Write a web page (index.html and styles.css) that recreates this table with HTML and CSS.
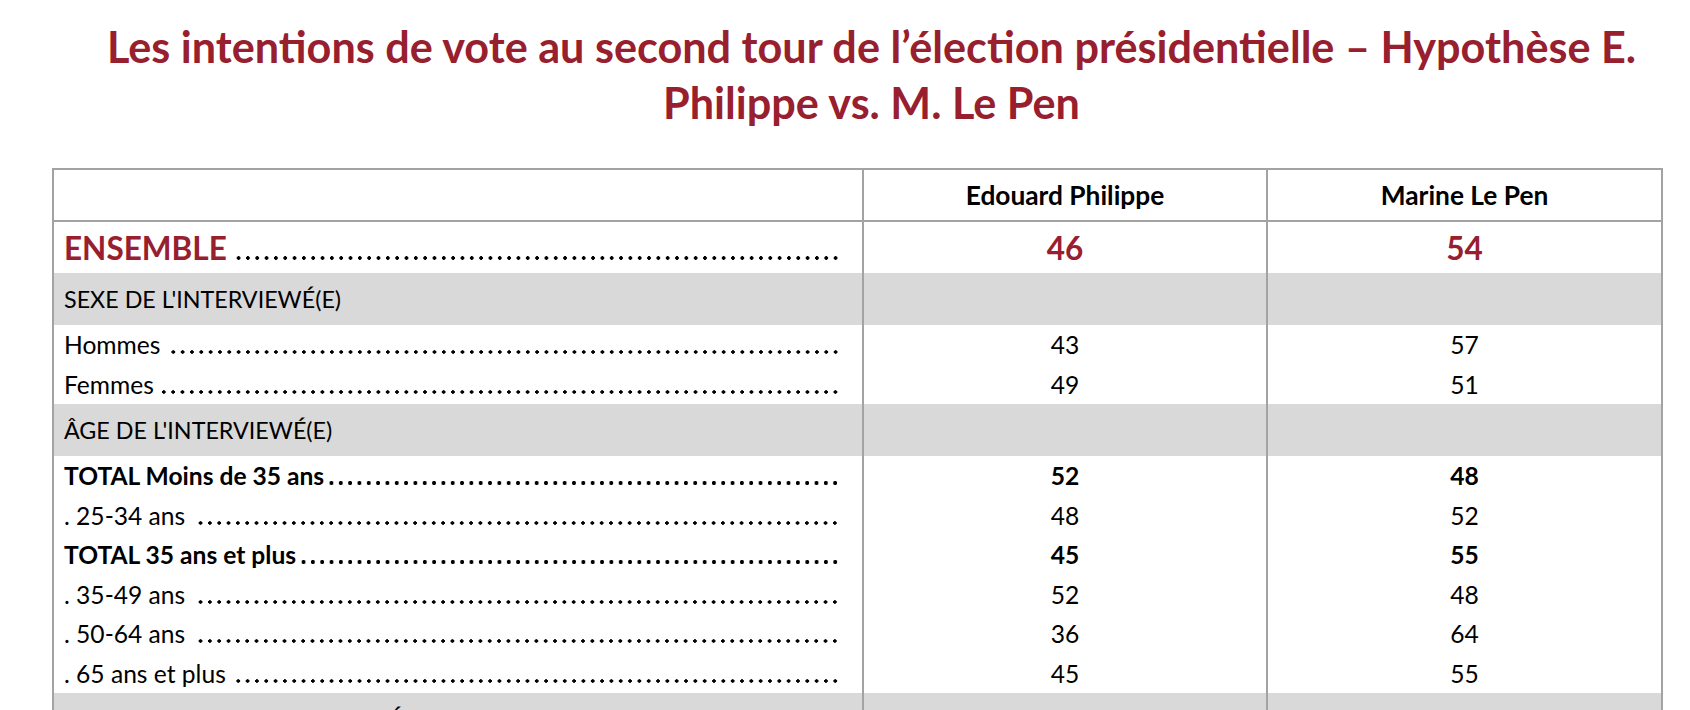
FILE: index.html
```html
<!DOCTYPE html>
<html lang="fr">
<head>
<meta charset="utf-8">
<title>Intentions de vote – Hypothèse E. Philippe vs. M. Le Pen</title>
<link rel="stylesheet" href="styles.css">
</head>
<body>
<h1 class="title">Les intentions de vote au second tour de l’élection présidentielle – Hypothèse E.<br>Philippe vs. M. Le Pen</h1>
<table class="poll">
  <colgroup>
    <col class="c-label">
    <col class="c-num">
    <col class="c-num2">
  </colgroup>
  <thead>
    <tr class="head">
      <th></th>
      <th>Edouard Philippe</th>
      <th>Marine Le Pen</th>
    </tr>
  </thead>
  <tbody>
    <tr class="total">
      <td class="lbl"><div class="leader"><span class="txt">ENSEMBLE</span><span class="dots"></span></div></td>
      <td>46</td>
      <td>54</td>
    </tr>
    <tr class="section"><td class="lbl">SEXE DE L'INTERVIEWÉ(E)</td><td></td><td></td></tr>
    <tr class="row"><td class="lbl"><div class="leader"><span class="txt">Hommes </span><span class="dots"></span></div></td><td>43</td><td>57</td></tr>
    <tr class="row"><td class="lbl"><div class="leader"><span class="txt">Femmes</span><span class="dots"></span></div></td><td>49</td><td>51</td></tr>
    <tr class="section"><td class="lbl">ÂGE DE L'INTERVIEWÉ(E)</td><td></td><td></td></tr>
    <tr class="row strong"><td class="lbl"><div class="leader"><span class="txt">TOTAL Moins de 35 ans</span><span class="dots"></span></div></td><td>52</td><td>48</td></tr>
    <tr class="row"><td class="lbl"><div class="leader"><span class="txt">. 25-34 ans </span><span class="dots"></span></div></td><td>48</td><td>52</td></tr>
    <tr class="row strong"><td class="lbl"><div class="leader"><span class="txt">TOTAL 35 ans et plus</span><span class="dots"></span></div></td><td>45</td><td>55</td></tr>
    <tr class="row"><td class="lbl"><div class="leader"><span class="txt">. 35-49 ans </span><span class="dots"></span></div></td><td>52</td><td>48</td></tr>
    <tr class="row"><td class="lbl"><div class="leader"><span class="txt">. 50-64 ans </span><span class="dots"></span></div></td><td>36</td><td>64</td></tr>
    <tr class="row"><td class="lbl"><div class="leader"><span class="txt">. 65 ans et plus </span><span class="dots"></span></div></td><td>45</td><td>55</td></tr>
    <tr class="section"><td class="lbl">PROFESSION DE L'INTERVIEWÉ(E)</td><td></td><td></td></tr>
  </tbody>
</table>
</body>
</html>
```

FILE: styles.css
```css
html, body {
  margin: 0;
  padding: 0;
  background: #ffffff;
  overflow: hidden;
}

body {
  font-family: Lato, "Open Sans", "Liberation Sans", sans-serif;
  color: #000000;
}

.title {
  margin: 18px 0 0 0;
  padding-left: 53px;
  font-size: 43.2px;
  line-height: 56px;
  font-weight: 700;
  color: #98202e;
  text-align: center;
}

.poll {
  margin: 38px 0 0 52px;
  width: 1609px;
  border-collapse: collapse;
  table-layout: fixed;
  border: 2px solid #a3a3a3;
  font-size: 24.6px;
}

.c-label { width: 810px; }
.c-num { width: 404px; }
.c-num2 { width: 395px; }

.poll th,
.poll td {
  padding: 0;
  text-align: center;
  vertical-align: middle;
  border-left: 2px solid #a3a3a3;
  border-right: 2px solid #a3a3a3;
}

.poll td.lbl {
  text-align: left;
  padding: 0 22px 0 10px;
}

.head th {
  height: 50px;
  font-weight: 700;
  font-size: 26.3px;
  border-bottom: 2px solid #a3a3a3;
}

.total td {
  height: 51px;
  font-size: 31.5px;
  font-weight: 700;
  color: #98202e;
}

.section td {
  height: 52px;
  font-size: 23.3px;
  background: #d9d9d9;
}

.row td {
  height: 39.5px;
}

.strong td {
  font-weight: 700;
}

.leader {
  display: flex;
  align-items: baseline;
}

.txt {
  white-space: pre;
}

.dots {
  flex: 1;
  height: 4px;
  margin-left: 3px;
  background-image: radial-gradient(circle, #000 1.5px, transparent 2px);
  background-size: 9.33px 4px;
  background-repeat: repeat-x;
  background-position: right center;
}

.total .dots {
  margin-left: 5px;
  background-image: radial-gradient(circle, #000 1.6px, transparent 2.1px);
}

.strong .dots {
  background-image: radial-gradient(circle, #000 1.8px, transparent 2.3px);
}
```
